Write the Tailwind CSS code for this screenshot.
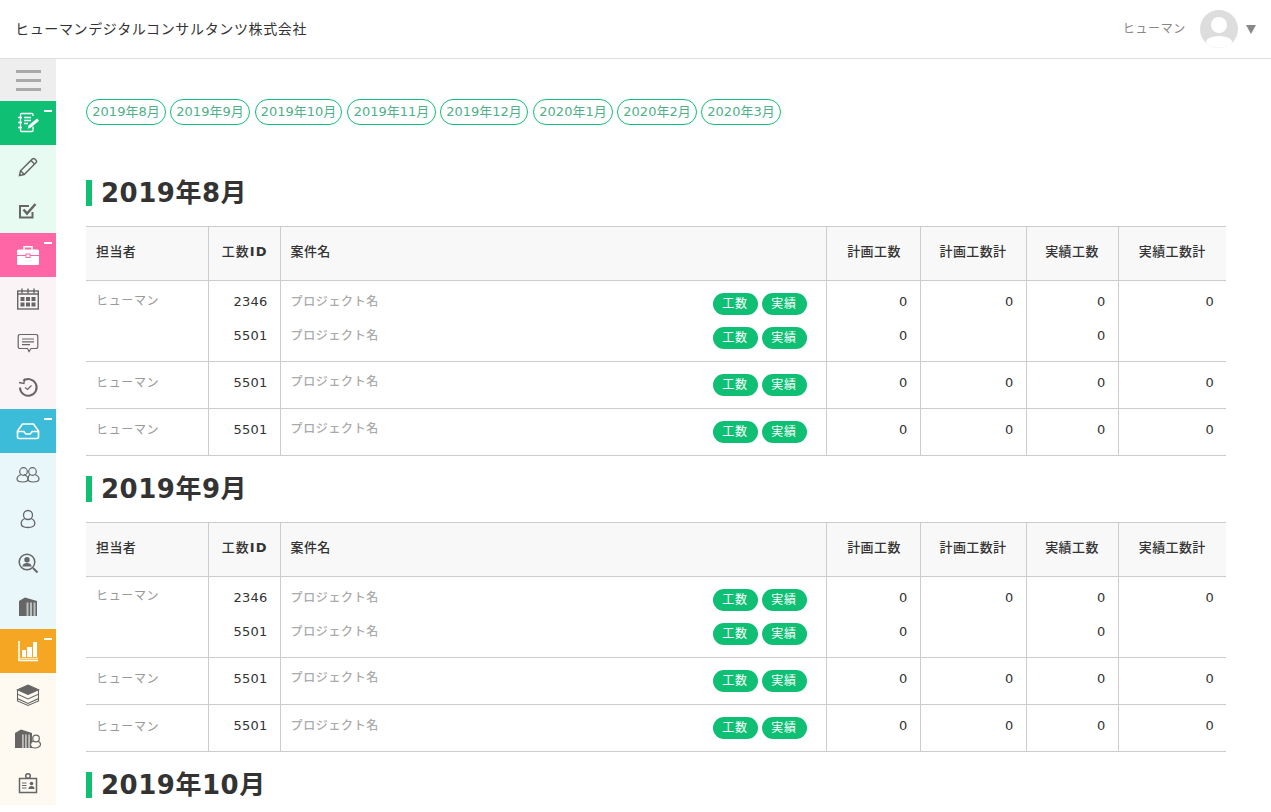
<!DOCTYPE html>
<html lang="ja">
<head>
  <meta charset="UTF-8" />
  <meta name="viewport" content="width=device-width, initial-scale=1.0"/>
  <title>工数一覧</title>
  <script src="https://cdn.jsdelivr.net/npm/@tailwindcss/browser@4"></script>
</head>
<body class="h-screen overflow-hidden bg-white text-[#333] tracking-[0.04em] font-['DejaVu_Sans','Noto_Sans_CJK_JP',sans-serif]">
  <!-- header -->
  <header class="h-[59px] border-b border-[#ddd] flex items-center justify-between pl-[15px] pr-[15px]">
    <div class="text-sm tracking-[0.045em]">ヒューマンデジタルコンサルタンツ株式会社</div>
    <div class="flex items-center">
      <span class="text-xs text-[#888]">ヒューマン</span>
      <svg class="ml-[14px]" width="38" height="38" viewBox="0 0 38 38"><defs><clipPath id="av"><circle cx="19" cy="19" r="19"/></clipPath></defs><circle cx="19" cy="19" r="19" fill="#ddd"/><g clip-path="url(#av)" fill="#fff"><circle cx="19" cy="15" r="8"/><ellipse cx="19" cy="32" rx="13" ry="6"/></g></svg>
      <svg class="ml-2" width="10" height="9" viewBox="0 0 10 9"><path d="M0 0h10L5 9z" fill="#888"/></svg>
    </div>
  </header>

  <div class="flex h-[753px]">
    <!-- sidebar -->
    <nav class="w-14 shrink-0 flex flex-col">
      <div class="h-[42px] bg-[#eeeeee] flex flex-col items-center justify-center gap-1.5">
        <span class="w-[25px] h-[3px] bg-[#aaa]"></span>
        <span class="w-[25px] h-[3px] bg-[#aaa]"></span>
        <span class="w-[25px] h-[3px] bg-[#aaa]"></span>
      </div>

      <a class="relative h-11 bg-[#0fbf74] flex items-center justify-center">
        <span class="absolute right-1 top-[9px] w-2 h-0.5 bg-white"></span>
        <svg width="24" height="24" viewBox="0 0 24 24" fill="none" stroke="#fff" stroke-width="1.300"><path d="M17 5V3.500a1 1 0 0 0-1-1H5.500a1 1 0 0 0-1 1v16a1 1 0 0 0 1 1H16a1 1 0 0 0 1-1v-4"/><path d="M2 6.500h4M2 11.500h4M2 16.500h4M8 6.500h7M8 9.500h7M8 12.500h4"/><path d="M12.500 14.500l8.500-7 2 2.300-8.300 7-3 .9z" fill="#fff" stroke="none"/></svg>
      </a>
      <a class="h-11 bg-[#e8fbf3] flex items-center justify-center">
        <svg width="24" height="24" viewBox="0 0 24 24" fill="none" stroke="#666" stroke-width="1.500"><path d="M3.500 20.500l1-4.700L16.500 3.900a1.500 1.500 0 0 1 2.200 0l1.400 1.400a1.500 1.500 0 0 1 0 2.200L8.200 19.500z"/><path d="M4.800 16l3.300 3.300M15 5.500l3.500 3.500"/></svg>
      </a>
      <a class="h-11 bg-[#e8fbf3] flex items-center justify-center">
        <svg width="24" height="24" viewBox="0 0 24 24" fill="none" stroke="#666"><path d="M16.500 13v5.500H4V7h9" stroke-width="2"/><path d="M7.500 10.500l3.500 4 8.500-9.500" stroke-width="2.500"/></svg>
      </a>

      <a class="relative h-11 bg-[#ff66a5] flex items-center justify-center">
        <span class="absolute right-1 top-[9px] w-2 h-0.5 bg-white"></span>
        <svg width="24" height="24" viewBox="0 0 24 24"><path d="M8 7V3.800h8V7" fill="none" stroke="#fff" stroke-width="1.500"/><rect x="1" y="6.500" width="22" height="15.500" rx="1.500" fill="#fff"/><path d="M1 12.500h22" stroke="#ff66a5"/><rect x="10" y="11" width="4" height="3.500" fill="#fff" stroke="#ff66a5"/></svg>
      </a>
      <a class="h-11 bg-[#faf4f6] flex items-center justify-center">
        <svg width="24" height="24" viewBox="0 0 24 24" fill="none" stroke="#666" stroke-width="1.400"><rect x="1.700" y="4" width="20.600" height="18"/><path d="M6 1.500v5M12 1.500v5M18 1.500v5"/><path d="M1.700 7h20.600" stroke-width="1.500"/><path d="M4.500 10h4v4h-4zM10 10h4v4h-4zM15.500 10h4v4h-4zM4.500 15.500h4v4h-4zM10 15.500h4v4h-4zM15.500 15.500h4v4h-4z" fill="#666" stroke="none"/></svg>
      </a>
      <a class="h-11 bg-[#faf4f6] flex items-center justify-center">
        <svg width="24" height="24" viewBox="0 0 24 24" fill="none" stroke="#666" stroke-width="1.200"><path d="M4 3.500h16a1.800 1.800 0 0 1 1.800 1.800v10.400a1.800 1.800 0 0 1-1.800 1.800h-5l-2 3-1.500-3H4a1.800 1.800 0 0 1-1.800-1.800V5.300A1.800 1.800 0 0 1 4 3.500z"/><path d="M6 8h12M6 10.800h12M6 13.600h8"/></svg>
      </a>
      <a class="h-11 bg-[#faf4f6] flex items-center justify-center">
        <svg width="24" height="24" viewBox="0 0 24 24" fill="none" stroke="#666" stroke-width="2"><path d="M7.300 5.800A8.300 8.300 0 1 1 4 12.500"/><path d="M3 7.500l5 1L8.500 3.500" stroke-width="1.300"/><path d="M9 12.500l2.500 2 4-4" stroke-width="1.200"/></svg>
      </a>

      <a class="relative h-11 bg-[#3cbcd8] flex items-center justify-center">
        <span class="absolute right-1 top-[9px] w-2 h-0.5 bg-white"></span>
        <svg width="24" height="24" viewBox="0 0 24 24" fill="none" stroke="#fff" stroke-width="1.700"><path d="M6.500 5h11l5 7v6a1.500 1.500 0 0 1-1.500 1.500H3A1.500 1.500 0 0 1 1.500 18v-6z"/><path d="M1.500 12.500h6.300l2 2.500h4.400l2-2.500h6.300"/></svg>
      </a>
      <a class="h-11 bg-[#e9f6fa] flex items-center justify-center">
        <svg width="24" height="24" viewBox="0 0 24 24" fill="none" stroke="#666" stroke-width="1.200"><circle cx="7.500" cy="8.500" r="3.800"/><circle cx="16.500" cy="8.500" r="3.800"/><path d="M5 11.500C2.500 12.500 1 14 1 16c0 2 3 3 6 3s5-1 5-3c0-2-1.500-3.500-4-4.500"/><path d="M14 11.500c-1.500 1-2 2.500-2 4.500 0 2 2 3 5 3s6-1 6-3c0-2-1.500-3.500-4-4.500"/></svg>
      </a>
      <a class="h-11 bg-[#e9f6fa] flex items-center justify-center">
        <svg width="24" height="24" viewBox="0 0 24 24" fill="none" stroke="#666" stroke-width="1.300"><circle cx="12" cy="8" r="4.500"/><path d="M9 11.500c-3 1-3.800 3-3.800 5 0 2.500 3 4 6.800 4s6.800-1.500 6.800-4c0-2-.8-4-3.800-5"/></svg>
      </a>
      <a class="h-11 bg-[#e9f6fa] flex items-center justify-center">
        <svg width="24" height="24" viewBox="0 0 24 24" fill="none" stroke="#666" stroke-width="1.500"><circle cx="11" cy="11" r="7.800"/><circle cx="11" cy="8.800" r="2.700" fill="#666" stroke="none"/><path d="M6.200 15.500c.5-2.500 2.500-3.500 4.800-3.500s4.300 1 4.800 3.500z" fill="#666" stroke="none"/><path d="M17 17l4.500 4.500" stroke-width="2"/></svg>
      </a>
      <a class="h-11 bg-[#e9f6fa] flex items-center justify-center">
        <svg width="24" height="24" viewBox="0 0 24 24"><path d="M3 21V6l6-3.500L21 6v15z" fill="#666"/><path d="M10.500 7.500h2v13.500h-2zM14 7.500h2v13.500h-2zM17.500 7.500h2v13.500h-2z" fill="#b9c0c2"/></svg>
      </a>

      <a class="relative h-11 bg-[#f5a623] flex items-center justify-center">
        <span class="absolute right-1 top-[9px] w-2 h-0.5 bg-white"></span>
        <svg width="24" height="24" viewBox="0 0 24 24" fill="none"><path d="M3 2v19.500h19" stroke="#fff" stroke-width="1.600"/><path d="M6 11h4v7H6zM11 8h5v10h-5zM17 3h4v15h-4z" fill="#fff"/><path d="M3 19.500h19" stroke="#fde3b0" stroke-width="1.500"/></svg>
      </a>
      <a class="h-11 bg-[#fefaf2] flex items-center justify-center">
        <svg width="24" height="24" viewBox="0 0 24 24" fill="none" stroke="#666" stroke-width="1.100"><path d="M12 2l10.500 4.800L12 11.500 1.500 6.800z" fill="#666"/><path d="M1.500 6.800v4.400L12 16l10.500-4.800V6.800M1.500 11.200v4.400L12 20.500l10.500-4.900v-4.400M1.500 15.600V18L12 22.500 22.500 18v-2.400"/></svg>
      </a>
      <a class="h-11 bg-[#fefaf2] flex items-center justify-center">
        <svg width="28" height="24" viewBox="0 0 28 24"><path d="M1 21V6l6-3.500L18 6v15z" fill="#666"/><path d="M8 7.500h1.800V21H8zM11 7.500h1.800V21H11zM14.200 7.500H16V21h-1.800z" fill="#c0bdb8"/><g fill="#fefaf2" stroke="#666" stroke-width="1.200"><path d="M19.500 14c-2 .7-3 2-3 3.500 0 2 2 3.500 4.500 3.500s5.500-1.500 5.500-3.500c0-1.500-1-2.800-3-3.500z"/><circle cx="22" cy="11.500" r="3.300"/></g></svg>
      </a>
      <a class="h-11 bg-[#fefaf2] flex items-center justify-center">
        <svg width="24" height="24" viewBox="0 0 24 24" fill="none" stroke="#666"><circle cx="12" cy="5" r="2.300" fill="none" stroke-width="1.500"/><rect x="3.500" y="7.500" width="17" height="14" stroke-width="1.500"/><path d="M6 12h4.500M6 14.500h4.500M6 17h4.500" stroke-width="1"/><circle cx="15.500" cy="12.500" r="1.800" fill="#666" stroke="none"/><path d="M12.500 18c0-2.200 1.300-3 3-3s3 .8 3 3z" fill="#666" stroke="none"/></svg>
      </a>
    </nav>

    <!-- main -->
    <main class="flex-1 pl-[30px] pr-[45px] pt-10">
      <div class="flex gap-1 text-[13px] tracking-normal text-[#4fb088]">
        <a class="h-[26px] w-20 flex items-center justify-center border border-[#0fbf74] rounded-full">2019年8月</a>
        <a class="h-[26px] w-20 flex items-center justify-center border border-[#0fbf74] rounded-full">2019年9月</a>
        <a class="h-[26px] w-[87px] flex items-center justify-center border border-[#0fbf74] rounded-full ml-px">2019年10月</a>
        <a class="h-[26px] w-[89px] flex items-center justify-center border border-[#0fbf74] rounded-full ml-px">2019年11月</a>
        <a class="h-[26px] w-[88px] flex items-center justify-center border border-[#0fbf74] rounded-full">2019年12月</a>
        <a class="h-[26px] w-20 flex items-center justify-center border border-[#0fbf74] rounded-full ml-px">2020年1月</a>
        <a class="h-[26px] w-20 flex items-center justify-center border border-[#0fbf74] rounded-full">2020年2月</a>
        <a class="h-[26px] w-20 flex items-center justify-center border border-[#0fbf74] rounded-full">2020年3月</a>
      </div>

      <h2 class="mt-[55px] h-[26px] flex items-center border-l-[6px] border-[#0fbf74] pl-[9px] text-[26px] font-bold tracking-[0.02em]">2019年8月</h2>
      <table class="mt-5 mb-5 w-[1140px] table-fixed border-collapse text-xs">
        <colgroup>
          <col class="w-[122px]"/><col class="w-[72px]"/><col class="w-[546px]"/><col class="w-[94px]"/><col class="w-[106px]"/><col class="w-[92px]"/><col class="w-[108px]"/>
        </colgroup>
        <thead>
          <tr class="h-[54px] bg-[#f8f8f8] text-[13px] tracking-[0.03em]">
            <th class="border-y border-r border-[#ccc] pl-2.5 pb-1 text-left font-medium">担当者</th>
            <th class="border border-[#ccc] pr-3 pb-1 text-right font-medium tracking-[0.08em]">工数<b>ID</b></th>
            <th class="border border-[#ccc] pl-2.5 pb-1 text-left font-medium">案件名</th>
            <th class="border border-[#ccc] pl-0.5 pb-1 text-center font-medium">計画工数</th>
            <th class="border border-[#ccc] pb-1 text-center font-medium">計画工数計</th>
            <th class="border border-[#ccc] pb-1 text-center font-medium">実績工数</th>
            <th class="border-y border-l border-[#ccc] pb-1 text-center font-medium">実績工数計</th>
          </tr>
        </thead>
        <tbody class="align-top leading-5">
          <tr>
            <td rowspan="2" class="border-b border-r border-[#ccc] pl-2.5 pt-2.5 text-[#999]">ヒューマン</td>
            <td class="border-x border-[#ccc] pr-3 pt-[11px] text-right text-[13px] tracking-[0.02em]">2346</td>
            <td class="border-x border-[#ccc] pl-2.5 pr-[19px] pt-3 pb-1.5"><div class="flex justify-between"><span class="text-[#aaa] font-medium -mt-px">プロジェクト名</span><span class="flex gap-1"><a class="w-[45px] h-[22px] rounded-full bg-[#0fbf74] text-white flex items-center justify-center">工数</a><a class="w-[45px] h-[22px] rounded-full bg-[#0fbf74] text-white flex items-center justify-center">実績</a></span></div></td>
            <td class="border-x border-[#ccc] pr-3 pt-[11px] text-right text-[13px] tracking-[0.02em]">0</td>
            <td rowspan="2" class="border-x border-b border-[#ccc] pr-3 pt-[11px] text-right text-[13px] tracking-[0.02em]">0</td>
            <td class="border-x border-[#ccc] pr-3 pt-[11px] text-right text-[13px] tracking-[0.02em]">0</td>
            <td rowspan="2" class="border-l border-b border-[#ccc] pr-3 pt-[11px] text-right text-[13px] tracking-[0.02em]">0</td>
          </tr>
          <tr>
            <td class="border-x border-b border-[#ccc] pr-3 pt-[5px] text-right text-[13px] tracking-[0.02em]">5501</td>
            <td class="border-x border-b border-[#ccc] pl-2.5 pr-[19px] pt-1.5 pb-3"><div class="flex justify-between"><span class="text-[#aaa] font-medium -mt-px">プロジェクト名</span><span class="flex gap-1"><a class="w-[45px] h-[22px] rounded-full bg-[#0fbf74] text-white flex items-center justify-center">工数</a><a class="w-[45px] h-[22px] rounded-full bg-[#0fbf74] text-white flex items-center justify-center">実績</a></span></div></td>
            <td class="border-x border-b border-[#ccc] pr-3 pt-[5px] text-right text-[13px] tracking-[0.02em]">0</td>
            <td class="border-x border-b border-[#ccc] pr-3 pt-[5px] text-right text-[13px] tracking-[0.02em]">0</td>
          </tr>
          <tr>
            <td class="border-b border-r border-[#ccc] pl-2.5 pt-[11px] text-[#999]">ヒューマン</td>
            <td class="border-x border-b border-[#ccc] pr-3 pt-[11px] text-right text-[13px] tracking-[0.02em]">5501</td>
            <td class="border-x border-b border-[#ccc] pl-2.5 pr-[19px] py-3"><div class="flex justify-between"><span class="text-[#aaa] font-medium -mt-0.5">プロジェクト名</span><span class="flex gap-1"><a class="w-[45px] h-[22px] rounded-full bg-[#0fbf74] text-white flex items-center justify-center">工数</a><a class="w-[45px] h-[22px] rounded-full bg-[#0fbf74] text-white flex items-center justify-center">実績</a></span></div></td>
            <td class="border-x border-b border-[#ccc] pr-3 pt-[11px] text-right text-[13px] tracking-[0.02em]">0</td>
            <td class="border-x border-b border-[#ccc] pr-3 pt-[11px] text-right text-[13px] tracking-[0.02em]">0</td>
            <td class="border-x border-b border-[#ccc] pr-3 pt-[11px] text-right text-[13px] tracking-[0.02em]">0</td>
            <td class="border-l border-b border-[#ccc] pr-3 pt-[11px] text-right text-[13px] tracking-[0.02em]">0</td>
          </tr>
          <tr>
            <td class="border-b border-r border-[#ccc] pl-2.5 pt-[11px] text-[#999]">ヒューマン</td>
            <td class="border-x border-b border-[#ccc] pr-3 pt-[11px] text-right text-[13px] tracking-[0.02em]">5501</td>
            <td class="border-x border-b border-[#ccc] pl-2.5 pr-[19px] py-3"><div class="flex justify-between"><span class="text-[#aaa] font-medium -mt-0.5">プロジェクト名</span><span class="flex gap-1"><a class="w-[45px] h-[22px] rounded-full bg-[#0fbf74] text-white flex items-center justify-center">工数</a><a class="w-[45px] h-[22px] rounded-full bg-[#0fbf74] text-white flex items-center justify-center">実績</a></span></div></td>
            <td class="border-x border-b border-[#ccc] pr-3 pt-[11px] text-right text-[13px] tracking-[0.02em]">0</td>
            <td class="border-x border-b border-[#ccc] pr-3 pt-[11px] text-right text-[13px] tracking-[0.02em]">0</td>
            <td class="border-x border-b border-[#ccc] pr-3 pt-[11px] text-right text-[13px] tracking-[0.02em]">0</td>
            <td class="border-l border-b border-[#ccc] pr-3 pt-[11px] text-right text-[13px] tracking-[0.02em]">0</td>
          </tr>
        </tbody>
      </table>

      <h2 class="h-[26px] flex items-center border-l-[6px] border-[#0fbf74] pl-[9px] text-[26px] font-bold tracking-[0.02em]">2019年9月</h2>
      <table class="mt-5 mb-5 w-[1140px] table-fixed border-collapse text-xs">
        <colgroup>
          <col class="w-[122px]"/><col class="w-[72px]"/><col class="w-[546px]"/><col class="w-[94px]"/><col class="w-[106px]"/><col class="w-[92px]"/><col class="w-[108px]"/>
        </colgroup>
        <thead>
          <tr class="h-[54px] bg-[#f8f8f8] text-[13px] tracking-[0.03em]">
            <th class="border-y border-r border-[#ccc] pl-2.5 pb-1 text-left font-medium">担当者</th>
            <th class="border border-[#ccc] pr-3 pb-1 text-right font-medium tracking-[0.08em]">工数<b>ID</b></th>
            <th class="border border-[#ccc] pl-2.5 pb-1 text-left font-medium">案件名</th>
            <th class="border border-[#ccc] pl-0.5 pb-1 text-center font-medium">計画工数</th>
            <th class="border border-[#ccc] pb-1 text-center font-medium">計画工数計</th>
            <th class="border border-[#ccc] pb-1 text-center font-medium">実績工数</th>
            <th class="border-y border-l border-[#ccc] pb-1 text-center font-medium">実績工数計</th>
          </tr>
        </thead>
        <tbody class="align-top leading-5">
          <tr>
            <td rowspan="2" class="border-b border-r border-[#ccc] pl-2.5 pt-[9px] text-[#999]">ヒューマン</td>
            <td class="border-x border-[#ccc] pr-3 pt-[11px] text-right text-[13px] tracking-[0.02em]">2346</td>
            <td class="border-x border-[#ccc] pl-2.5 pr-[19px] pt-3 pb-1.5"><div class="flex justify-between"><span class="text-[#aaa] font-medium -mt-px">プロジェクト名</span><span class="flex gap-1"><a class="w-[45px] h-[22px] rounded-full bg-[#0fbf74] text-white flex items-center justify-center">工数</a><a class="w-[45px] h-[22px] rounded-full bg-[#0fbf74] text-white flex items-center justify-center">実績</a></span></div></td>
            <td class="border-x border-[#ccc] pr-3 pt-[11px] text-right text-[13px] tracking-[0.02em]">0</td>
            <td rowspan="2" class="border-x border-b border-[#ccc] pr-3 pt-[11px] text-right text-[13px] tracking-[0.02em]">0</td>
            <td class="border-x border-[#ccc] pr-3 pt-[11px] text-right text-[13px] tracking-[0.02em]">0</td>
            <td rowspan="2" class="border-l border-b border-[#ccc] pr-3 pt-[11px] text-right text-[13px] tracking-[0.02em]">0</td>
          </tr>
          <tr>
            <td class="border-x border-b border-[#ccc] pr-3 pt-[5px] text-right text-[13px] tracking-[0.02em]">5501</td>
            <td class="border-x border-b border-[#ccc] pl-2.5 pr-[19px] pt-1.5 pb-3"><div class="flex justify-between"><span class="text-[#aaa] font-medium -mt-px">プロジェクト名</span><span class="flex gap-1"><a class="w-[45px] h-[22px] rounded-full bg-[#0fbf74] text-white flex items-center justify-center">工数</a><a class="w-[45px] h-[22px] rounded-full bg-[#0fbf74] text-white flex items-center justify-center">実績</a></span></div></td>
            <td class="border-x border-b border-[#ccc] pr-3 pt-[5px] text-right text-[13px] tracking-[0.02em]">0</td>
            <td class="border-x border-b border-[#ccc] pr-3 pt-[5px] text-right text-[13px] tracking-[0.02em]">0</td>
          </tr>
          <tr>
            <td class="border-b border-r border-[#ccc] pl-2.5 pt-[11px] text-[#999]">ヒューマン</td>
            <td class="border-x border-b border-[#ccc] pr-3 pt-[11px] text-right text-[13px] tracking-[0.02em]">5501</td>
            <td class="border-x border-b border-[#ccc] pl-2.5 pr-[19px] py-3"><div class="flex justify-between"><span class="text-[#aaa] font-medium -mt-0.5">プロジェクト名</span><span class="flex gap-1"><a class="w-[45px] h-[22px] rounded-full bg-[#0fbf74] text-white flex items-center justify-center">工数</a><a class="w-[45px] h-[22px] rounded-full bg-[#0fbf74] text-white flex items-center justify-center">実績</a></span></div></td>
            <td class="border-x border-b border-[#ccc] pr-3 pt-[11px] text-right text-[13px] tracking-[0.02em]">0</td>
            <td class="border-x border-b border-[#ccc] pr-3 pt-[11px] text-right text-[13px] tracking-[0.02em]">0</td>
            <td class="border-x border-b border-[#ccc] pr-3 pt-[11px] text-right text-[13px] tracking-[0.02em]">0</td>
            <td class="border-l border-b border-[#ccc] pr-3 pt-[11px] text-right text-[13px] tracking-[0.02em]">0</td>
          </tr>
          <tr>
            <td class="border-b border-r border-[#ccc] pl-2.5 pt-3 text-[#999]">ヒューマン</td>
            <td class="border-x border-b border-[#ccc] pr-3 pt-[11px] text-right text-[13px] tracking-[0.02em]">5501</td>
            <td class="border-x border-b border-[#ccc] pl-2.5 pr-[19px] py-3"><div class="flex justify-between"><span class="text-[#aaa] font-medium -mt-px">プロジェクト名</span><span class="flex gap-1"><a class="w-[45px] h-[22px] rounded-full bg-[#0fbf74] text-white flex items-center justify-center">工数</a><a class="w-[45px] h-[22px] rounded-full bg-[#0fbf74] text-white flex items-center justify-center">実績</a></span></div></td>
            <td class="border-x border-b border-[#ccc] pr-3 pt-[11px] text-right text-[13px] tracking-[0.02em]">0</td>
            <td class="border-x border-b border-[#ccc] pr-3 pt-[11px] text-right text-[13px] tracking-[0.02em]">0</td>
            <td class="border-x border-b border-[#ccc] pr-3 pt-[11px] text-right text-[13px] tracking-[0.02em]">0</td>
            <td class="border-l border-b border-[#ccc] pr-3 pt-[11px] text-right text-[13px] tracking-[0.02em]">0</td>
          </tr>
        </tbody>
      </table>

      <h2 class="h-[26px] flex items-center border-l-[6px] border-[#0fbf74] pl-[9px] text-[26px] font-bold tracking-[0.02em]">2019年10月</h2>
    </main>
  </div>
</body>
</html>
